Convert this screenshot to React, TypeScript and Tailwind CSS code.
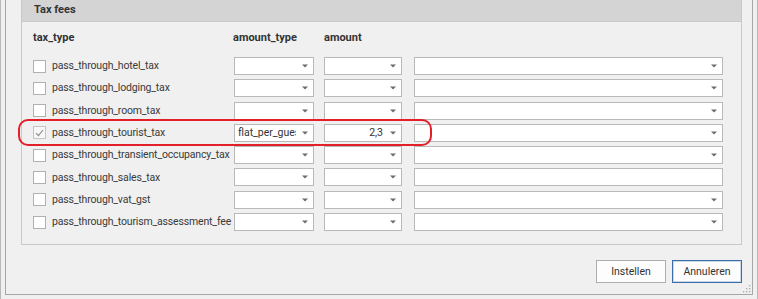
import React from 'react';

const font = { fontFamily: 'Roboto, "Liberation Sans", sans-serif' };

interface TaxRow {
  name: string;
  checked?: boolean;
  amountType?: string;
  amount?: string;
  noArrow?: boolean;
}

const rows: TaxRow[] = [
  { name: 'pass_through_hotel_tax' },
  { name: 'pass_through_lodging_tax' },
  { name: 'pass_through_room_tax' },
  { name: 'pass_through_tourist_tax', checked: true, amountType: 'flat_per_guest', amount: '2,3' },
  { name: 'pass_through_transient_occupancy_tax' },
  { name: 'pass_through_sales_tax', noArrow: true },
  { name: 'pass_through_vat_gst' },
  { name: 'pass_through_tourism_assessment_fee' },
];

const Arrow = () => (
  <svg width="6" height="4" viewBox="0 0 6 4" className="shrink-0">
    <path d="M0 0.5 H6 L3 3.5 Z" fill="#6b6b6b" />
  </svg>
);

const Field = ({ width, text, right, arrow = true }: { width: string; text?: string; right?: boolean; arrow?: boolean }) => (
  <div className={`${width} h-[18px] bg-white border border-[#b9b9b9] flex items-center pl-[3px] pr-[5px] gap-[6px]`}>
    <div className={`flex-1 min-w-0 overflow-hidden whitespace-nowrap text-[10.5px] text-[#333] leading-[16px] ${right ? 'text-right pr-[1px]' : ''}`}>
      {text}
    </div>
    {arrow && <Arrow />}
  </div>
);

const Checkbox = ({ checked }: { checked?: boolean }) => (
  <div className={`w-[13px] h-[13px] border flex items-center justify-center ${checked ? 'border-[#c4c4c4] bg-[#f7f7f7]' : 'border-[#b0b0b0] bg-white'}`}>
    {checked && (
      <svg width="9" height="8" viewBox="0 0 9 8">
        <path d="M1 4.2 L3.4 6.6 L8 1" fill="none" stroke="#8a8a8a" strokeWidth="1.1" />
      </svg>
    )}
  </div>
);

export default function App() {
  return (
    <div className="relative w-[758px] h-[299px] bg-[#f0f0f0] border-x border-[#b8b8b8] px-[4px]" style={font}>
      <div className="relative h-[295px] border-x border-b border-[#a6a6a6] flex flex-col">
        {/* Tax fees group */}
        <div className="ml-[15px] mr-[10px] h-[245px] border-x border-b border-[#c9c9c9] flex flex-col">
          <div className="h-[22px] bg-[#d4d4d4] border-b border-[#cacaca] flex items-center pl-[12px] text-[11px] font-bold text-[#333]">
            Tax fees
          </div>
          <div className="pl-[11px] pt-[7px] flex flex-col">
            <div className="h-[18px] flex items-center text-[11px] font-bold text-[#333]">
              <div className="w-[200px]">tax_type</div>
              <div className="w-[91px]">amount_type</div>
              <div>amount</div>
            </div>
            <div className="mt-[10px] flex flex-col gap-[4.3px]">
              {rows.map((r) => (
                <div key={r.name} className="h-[18px] flex items-center">
                  <div className="w-[19px]">
                    <Checkbox checked={r.checked} />
                  </div>
                  <div className="w-[182px] whitespace-nowrap text-[10.5px] tracking-[-0.17px] text-[#3a3a3a]">{r.name}</div>
                  <Field width="w-[80px]" text={r.amountType} />
                  <div className="w-[10px]" />
                  <Field width="w-[78px]" text={r.amount} right />
                  <div className="w-[12px]" />
                  <Field width="w-[309px]" arrow={!r.noArrow} />
                </div>
              ))}
            </div>
          </div>
        </div>

        {/* Buttons */}
        <div className="mt-[15px] mr-[10px] flex justify-end gap-[6px] text-[10.5px] text-[#333]">
          <button className="w-[70px] h-[23px] bg-[#fdfdfd] border border-[#adadad]">Instellen</button>
          <button className="w-[70px] h-[23px] bg-[#fdfdfd] border border-[#3b6ea8] shadow-[inset_0_0_0_1px_#c9d8ea]">Annuleren</button>
        </div>

        {/* size grip */}
        <svg width="8" height="8" viewBox="0 0 8 8" className="absolute right-[1px] bottom-[1px]">
          <rect x="6" y="0" width="1.3" height="1.3" fill="#a8a8a8" />
          <rect x="3" y="3" width="1.3" height="1.3" fill="#a8a8a8" />
          <rect x="6" y="3" width="1.3" height="1.3" fill="#a8a8a8" />
          <rect x="0" y="6" width="1.3" height="1.3" fill="#a8a8a8" />
          <rect x="3" y="6" width="1.3" height="1.3" fill="#a8a8a8" />
          <rect x="6" y="6" width="1.3" height="1.3" fill="#a8a8a8" />
        </svg>
      </div>

      {/* red highlight annotation */}
      <div className="absolute left-[17px] top-[119px] w-[414px] h-[27px] border-[2.5px] border-[#e3202a] rounded-[10px] pointer-events-none" />
    </div>
  );
}
